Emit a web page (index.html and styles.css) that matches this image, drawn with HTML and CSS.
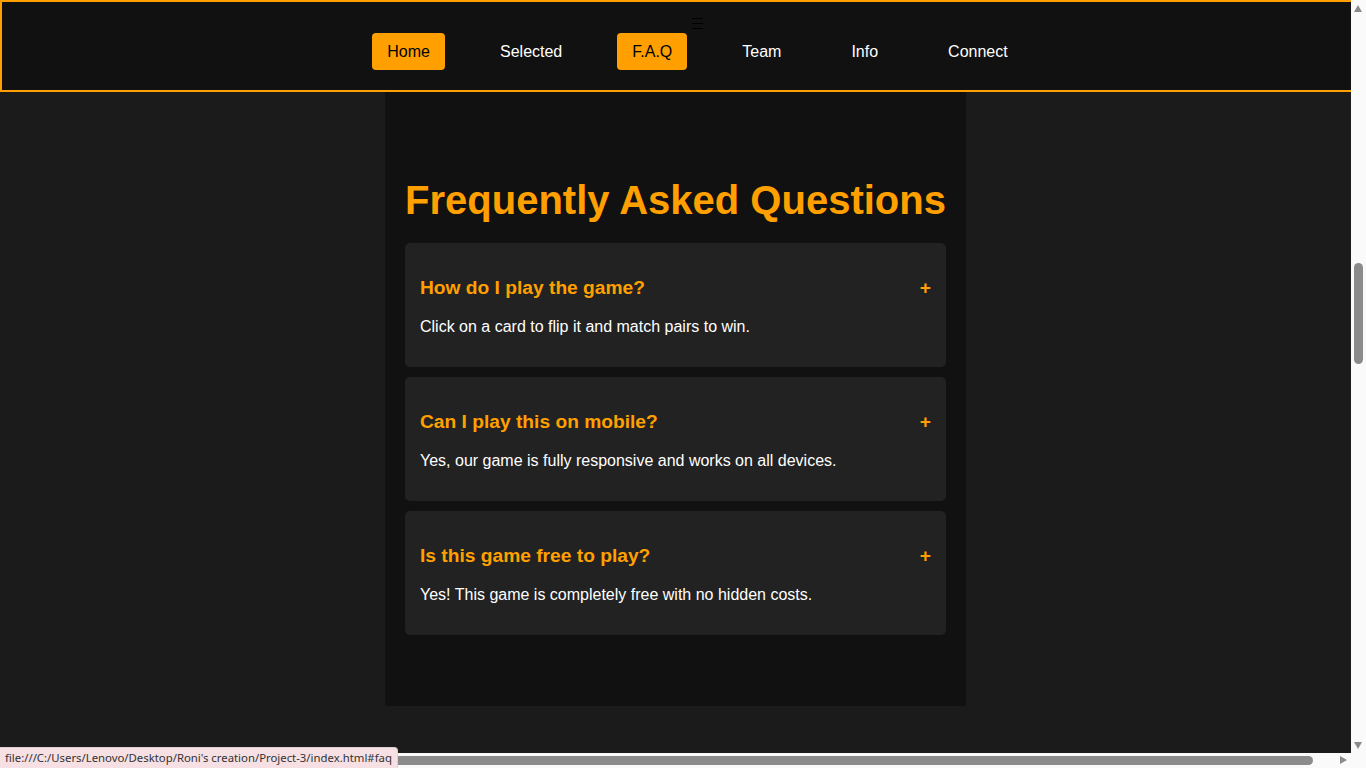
FILE: index.html
```html
<!DOCTYPE html>
<html lang="en">
<head>
<meta charset="UTF-8">
<title>FAQ</title>
<link rel="stylesheet" href="styles.css">
</head>
<body>
<header class="site-header">
  <button class="menu-toggle" aria-label="Menu">
    <svg width="11" height="11" viewBox="0 0 11 11"><rect x="0" y="0" width="11" height="1" fill="#000"/><rect x="0" y="5" width="11" height="1" fill="#000"/><rect x="0" y="10" width="11" height="1" fill="#000"/></svg>
  </button>
  <nav>
    <ul class="nav-list">
      <li><a class="nav-link active" href="#home">Home</a></li>
      <li><a class="nav-link" href="#selected">Selected</a></li>
      <li><a class="nav-link active" href="#faq">F.A.Q</a></li>
      <li><a class="nav-link" href="#team">Team</a></li>
      <li><a class="nav-link" href="#info">Info</a></li>
      <li><a class="nav-link" href="#connect">Connect</a></li>
    </ul>
  </nav>
</header>
<div class="page">
  <section class="faq" id="faq">
    <h2 class="faq-title">Frequently Asked Questions</h2>
    <div class="faq-item">
      <div class="faq-question"><h3>How do I play the game?</h3><span class="faq-toggle">+</span></div>
      <p class="faq-answer">Click on a card to flip it and match pairs to win.</p>
    </div>
    <div class="faq-item">
      <div class="faq-question"><h3>Can I play this on mobile?</h3><span class="faq-toggle">+</span></div>
      <p class="faq-answer">Yes, our game is fully responsive and works on all devices.</p>
    </div>
    <div class="faq-item">
      <div class="faq-question"><h3>Is this game free to play?</h3><span class="faq-toggle">+</span></div>
      <p class="faq-answer">Yes! This game is completely free with no hidden costs.</p>
    </div>
  </section>
</div>

<div class="vscroll">
  <span class="arrow-up"></span>
  <span class="vthumb"></span>
  <span class="arrow-down"></span>
</div>
<div class="hscroll">
  <span class="hthumb"></span>
  <span class="arrow-right"></span>
</div>
<div class="scroll-corner"></div>
<div class="status-bar">file:///C:/Users/Lenovo/Desktop/Roni's creation/Project-3/index.html#faq</div>
</body>
</html>
```
FILE: styles.css
```css
* { box-sizing: border-box; }
html, body {
  margin: 0;
  padding: 0;
  height: 768px;
  overflow: hidden;
}
body {
  background: #1b1b1b;
  font-family: "Liberation Sans", Arial, sans-serif;
  color: #fff;
}

.site-header {
  width: 1366px;
  height: 92px;
  background: #111;
  border: 2px solid #ffa000;
  display: flex;
  flex-direction: column;
  align-items: center;
  padding: 16px 0 0 29px;
}
.menu-toggle {
  background: none;
  border: 0;
  padding: 0;
  width: 11px;
  height: 11px;
  display: block;
}
.menu-toggle svg { display: block; }
.nav-list {
  list-style: none;
  margin: 4px 0 0;
  padding: 0;
  display: flex;
  gap: 40px;
}
.nav-link {
  display: block;
  height: 37px;
  line-height: 37px;
  padding: 0 15px;
  font-size: 16px;
  color: #fff;
  text-decoration: none;
  border-radius: 4px;
}
.nav-link.active {
  background: #ffa000;
  color: #000;
}

.page {
  width: 1351px;
  display: flex;
  justify-content: center;
}
.faq {
  width: 581px;
  height: 614px;
  background: #111;
  padding: 85px 20px 0;
}
.faq-title {
  margin: 0 0 20px;
  font-size: 40px;
  line-height: 46px;
  font-weight: bold;
  color: #ffa000;
  text-align: center;
}
.faq-item {
  background: #222;
  border-radius: 5px;
  padding: 15px;
  margin-bottom: 10px;
}
.faq-question {
  display: flex;
  justify-content: space-between;
  align-items: center;
  padding-top: 19px;
}
.faq-question h3 {
  margin: 0;
  font-size: 19.2px;
  line-height: 22px;
  color: #ffa000;
}
.faq-toggle {
  font-size: 19.2px;
  font-weight: bold;
  color: #ffa000;
  line-height: 22px;
}
.faq-answer {
  margin: 19px 0 15.6px;
  font-size: 16px;
  line-height: 18.4px;
  color: #fff;
}

/* browser chrome overlays */
.vscroll {
  position: fixed;
  top: 0;
  right: 0;
  width: 15px;
  height: 753px;
  background: #fafafa;
}
.vthumb {
  position: absolute;
  left: 3px;
  top: 263px;
  width: 9px;
  height: 101px;
  border-radius: 5px;
  background: #8b8b8b;
}
.arrow-up, .arrow-down {
  position: absolute;
  left: 3px;
  width: 0;
  height: 0;
  border-left: 4.5px solid transparent;
  border-right: 4.5px solid transparent;
}
.arrow-up { top: 5px; border-bottom: 7px solid #8b8b8b; }
.arrow-down { top: 742px; border-top: 7px solid #8b8b8b; }
.hscroll {
  position: fixed;
  left: 0;
  bottom: 0;
  width: 1351px;
  height: 15px;
  background: #fafafa;
}
.hthumb {
  position: absolute;
  left: 0;
  top: 3px;
  width: 1313px;
  height: 9px;
  border-radius: 5px;
  background: #8b8b8b;
}
.arrow-right {
  position: absolute;
  left: 1340px;
  top: 3px;
  width: 0;
  height: 0;
  border-top: 4.5px solid transparent;
  border-bottom: 4.5px solid transparent;
  border-left: 7px solid #8b8b8b;
}
.scroll-corner {
  position: fixed;
  right: 0;
  bottom: 0;
  width: 15px;
  height: 15px;
  background: #fafafa;
}
.status-bar {
  position: fixed;
  left: 0;
  bottom: 0;
  height: 21px;
  padding: 0 5px 0 5px;
  line-height: 20px;
  background: #f6e0e3;
  border: 1px solid #dcd0d2;
  border-left: 0;
  border-bottom: 0;
  border-top-right-radius: 4px;
  font-family: "Noto Sans", "Open Sans", sans-serif;
  font-size: 11.35px;
  color: #333;
  white-space: nowrap;
}
```
